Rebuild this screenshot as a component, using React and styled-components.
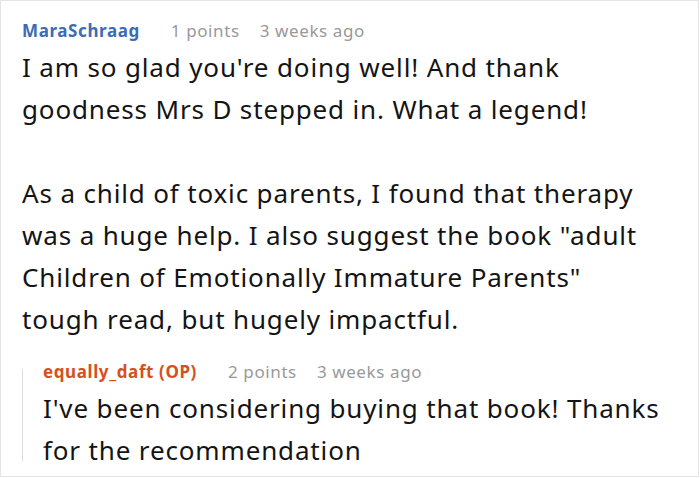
import React from 'react'
import styled, { createGlobalStyle } from 'styled-components'

const GlobalStyle = createGlobalStyle`
  html, body {
    margin: 0;
    padding: 0;
    background: #fff;
  }
  body {
    font-family: "Noto Sans", "Open Sans", sans-serif;
  }
`

const Card = styled.div`
  box-sizing: border-box;
  width: 699px;
  height: 477px;
  border: 1px solid #e4e4e4;
  padding: 17px 21px 0 21px;
  overflow: hidden;
`

const Meta = styled.div`
  display: flex;
  align-items: baseline;
  font-size: 17px;
  line-height: 26px;
  letter-spacing: 0.6px;
  color: #999;
`

const Author = styled.span`
  font-weight: 700;
  color: ${(p) => (p.$op ? '#d5501e' : '#3b6cb8')};
  margin-right: 31px;
`

const Points = styled.span`
  margin-right: 20px;
`

const Body = styled.div`
  margin-top: 2px;
  font-size: 26px;
  line-height: 42px;
  letter-spacing: 0.85px;
  color: #141414;
`

const Reply = styled.div`
  display: flex;
  margin-top: 19px;
`

const ThreadLine = styled.div`
  width: 1px;
  flex: none;
  background: #dcdcdc;
  margin: 10px 0 10px 0;
`

const ReplyContent = styled.div`
  padding-left: 20px;
`

const Comment = ({ author, op, points, time, children }) => (
  <div>
    <Meta>
      <Author $op={op}>{author}</Author>
      <Points>{points} points</Points>
      <span>{time}</span>
    </Meta>
    <Body>{children}</Body>
  </div>
)

export default function App() {
  return (
    <>
      <GlobalStyle />
      <Card>
        <Comment author="MaraSchraag" points={1} time="3 weeks ago">
          I am so glad you're doing well! And thank
          <br />
          goodness Mrs D stepped in. What a legend!
          <br />
          <br />
          As a child of toxic parents, I found that therapy
          <br />
          was a huge help. I also suggest the book "adult
          <br />
          Children of Emotionally Immature Parents"
          <br />
          tough read, but hugely impactful.
        </Comment>
        <Reply>
          <ThreadLine />
          <ReplyContent>
            <Comment author="equally_daft (OP)" op points={2} time="3 weeks ago">
              I've been considering buying that book! Thanks
              <br />
              for the recommendation
            </Comment>
          </ReplyContent>
        </Reply>
      </Card>
    </>
  )
}
